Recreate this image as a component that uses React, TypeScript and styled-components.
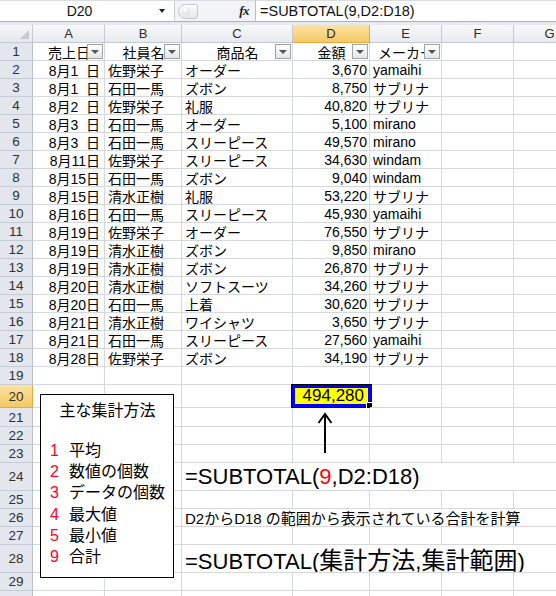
import React from 'react';
import styled, { createGlobalStyle, css } from 'styled-components';

const GlobalStyle = createGlobalStyle`
  html, body {
    margin: 0;
    padding: 0;
    background: #fff;
  }
  body {
    font-family: "Liberation Sans", "Noto Sans CJK JP", sans-serif;
  }
`;

const COLS = '33px 72px 77px 111px 77px 72px 72px 72px';
const GRID = '#d5d8dc';

const Screen = styled.div`
  width: 556px;
  height: 596px;
  overflow: hidden;
  background: #fff;
`;

const TopBar = styled.div`
  display: flex;
  height: 21px;
  box-sizing: border-box;
  border-top: 1px solid #d9dde3;
  background: #f2f4f7;
`;

const NameBox = styled.div`
  width: 175px;
  box-sizing: border-box;
  display: flex;
  align-items: center;
  background: #fff;
  border-right: 1px solid #c9ced6;
  font-size: 14px;
  color: #111;
`;

const NameText = styled.div`
  flex: 1;
  text-align: center;
  padding-left: 4px;
`;

const DropArrow = styled.div`
  width: 0;
  height: 0;
  margin: 0 9px 0 4px;
  border-left: 3px solid transparent;
  border-right: 3px solid transparent;
  border-top: 4px solid #222;
`;

const FxArea = styled.div`
  width: 80px;
  display: flex;
  align-items: center;
  box-sizing: border-box;
  padding-left: 3px;
`;

const Pill = styled.div`
  width: 20px;
  height: 15px;
  box-sizing: border-box;
  border-radius: 8px 3px 3px 8px;
  border: 1px solid #c3c8cf;
  background: linear-gradient(#fdfdfd, #e4e7eb);
  display: flex;
  align-items: center;
  padding-left: 3px;
`;

const PillDot = styled.div`
  width: 8px;
  height: 8px;
  border-radius: 50%;
  background: radial-gradient(circle at 40% 35%, #fff, #cfd3d8);
`;

const Fx = styled.div`
  margin-left: auto;
  margin-right: 6px;
  font-family: "Liberation Serif", serif;
  font-style: italic;
  font-weight: bold;
  font-size: 13px;
  color: #222;
  letter-spacing: -0.5px;
`;

const FormulaInput = styled.div`
  flex: 1;
  display: flex;
  align-items: center;
  background: #fff;
  border-left: 1px solid #b9bfc8;
  padding-left: 4px;
  font-size: 14.5px;
  color: #111;
  white-space: nowrap;
`;

const Strip = styled.div`
  height: 4px;
  box-sizing: border-box;
  border-top: 1px solid #aab2bd;
  background: #e6e9ee;
`;

const Sheet = styled.div`
  position: relative;
`;

const Row = styled.div<{ $h: number }>`
  display: grid;
  grid-template-columns: ${COLS};
  height: ${p => p.$h}px;
`;

const headActive = css`
  background: linear-gradient(#fbe3a3, #f5c863);
  border-color: #e7a83f;
`;

const Corner = styled.div`
  position: relative;
  box-sizing: border-box;
  background: linear-gradient(#f6f7f9, #e5e8ec);
  border-right: 1px solid #c3c9d1;
  border-bottom: 1px solid #c3c9d1;

  &::after {
    content: '';
    position: absolute;
    right: 3px;
    bottom: 3px;
    width: 0;
    height: 0;
    border-left: 9px solid transparent;
    border-bottom: 9px solid #c4c9d0;
  }
`;

const ColHead = styled.div<{ $active?: boolean }>`
  box-sizing: border-box;
  display: flex;
  align-items: center;
  justify-content: center;
  background: linear-gradient(#f8f9fa, #e7eaee);
  border-right: 1px solid #c3c9d1;
  border-bottom: 1px solid #c3c9d1;
  font-size: 13px;
  color: #2b2b2b;
  ${p => p.$active && headActive}
`;

const RowHead = styled.div<{ $active?: boolean }>`
  box-sizing: border-box;
  display: flex;
  align-items: center;
  justify-content: center;
  background: #e3e7ed;
  border-right: 1px solid #b9c1cc;
  border-bottom: 1px solid #c6ccd5;
  font-size: 13.5px;
  color: #2f2f2f;
  ${p => p.$active && headActive}
`;

const Cell = styled.div<{ $align?: 'left' | 'right' | 'center'; $span?: number }>`
  position: relative;
  box-sizing: border-box;
  display: flex;
  align-items: center;
  justify-content: ${p => (p.$align === 'right' ? 'flex-end' : p.$align === 'center' ? 'center' : 'flex-start')};
  padding: 0 2px 0 3px;
  border-right: 1px solid ${GRID};
  border-bottom: 1px solid ${GRID};
  font-size: 14px;
  color: #000;
  white-space: nowrap;
  overflow: hidden;
  ${p => p.$span && css`grid-column: span ${p.$span};`}
`;

const DateCell = styled(Cell)`
  padding-right: 4px;
`;

const DayPad = styled.span`
  display: inline-block;
  width: 0.556em;
`;

const SelectedCell = styled(Cell)`
  background: #ffff00;
  overflow: visible;
  padding-right: 5px;
  font-size: 17px;

  &::before {
    content: '';
    position: absolute;
    left: -2px;
    top: -1px;
    right: -3px;
    bottom: -1px;
    border: 1px solid #000;
    box-shadow: inset 0 0 0 3px #0000ff;
  }
`;

const CellText = styled.span`
  position: relative;
`;

const FillHandle = styled.div`
  position: absolute;
  right: -4px;
  bottom: -2px;
  width: 5px;
  height: 5px;
  background: #000;
  border: 1px solid #fff;
`;

const FilterButton = styled.div`
  position: absolute;
  right: 1px;
  top: 1px;
  width: 16px;
  height: 15px;
  box-sizing: border-box;
  border: 1px solid #9ea4ab;
  background: linear-gradient(#ffffff, #e3e5e8);
  display: flex;
  align-items: center;
  justify-content: center;

  &::after {
    content: '';
    width: 0;
    height: 0;
    border-left: 4px solid transparent;
    border-right: 4px solid transparent;
    border-top: 4px solid #555;
  }
`;

const BigFormula = styled.span`
  font-size: 22px;
  color: #000;
`;

const BigKanji = styled.span`
  font-size: 24px;
`;

const Note = styled.span`
  font-size: 15px;
  color: #000;
`;

const Red = styled.span`
  color: #ff0000;
`;

const MethodBox = styled.div`
  position: absolute;
  left: 40px;
  top: 369px;
  width: 134px;
  height: 184px;
  box-sizing: border-box;
  border: 1px solid #000;
  background: #fff;
  padding: 6px 0 0 9px;
  font-size: 16px;
  color: #000;
`;

const BoxTitle = styled.div`
  line-height: 20px;
  text-align: center;
  padding-right: 8px;
  margin-bottom: 19px;
`;

const MethodItem = styled.div`
  display: flex;
  line-height: 21.2px;
`;

const MethodNo = styled.span`
  width: 19px;
  color: #ff0022;
`;

const Arrow = styled.svg`
  position: absolute;
  left: 315px;
  top: 386px;
`;

const HEADERS = ['売上日', '社員名', '商品名', '金額', 'メーカー'];

const DATA: string[][] = [
  ['8月1日', '佐野栄子', 'オーダー', '3,670', 'yamaihi'],
  ['8月1日', '石田一馬', 'ズボン', '8,750', 'サブリナ'],
  ['8月2日', '佐野栄子', '礼服', '40,820', 'サブリナ'],
  ['8月3日', '石田一馬', 'オーダー', '5,100', 'mirano'],
  ['8月3日', '石田一馬', 'スリーピース', '49,570', 'mirano'],
  ['8月11日', '佐野栄子', 'スリーピース', '34,630', 'windam'],
  ['8月15日', '石田一馬', 'ズボン', '9,040', 'windam'],
  ['8月15日', '清水正樹', '礼服', '53,220', 'サブリナ'],
  ['8月16日', '石田一馬', 'スリーピース', '45,930', 'yamaihi'],
  ['8月19日', '佐野栄子', 'オーダー', '76,550', 'サブリナ'],
  ['8月19日', '清水正樹', 'ズボン', '9,850', 'mirano'],
  ['8月19日', '清水正樹', 'ズボン', '26,870', 'サブリナ'],
  ['8月20日', '清水正樹', 'ソフトスーツ', '34,260', 'サブリナ'],
  ['8月20日', '石田一馬', '上着', '30,620', 'サブリナ'],
  ['8月21日', '清水正樹', 'ワイシャツ', '3,650', 'サブリナ'],
  ['8月21日', '石田一馬', 'スリーピース', '27,560', 'yamaihi'],
  ['8月28日', '佐野栄子', 'ズボン', '34,190', 'サブリナ'],
];

const METHODS: [string, string][] = [
  ['1', '平均'],
  ['2', '数値の個数'],
  ['3', 'データの個数'],
  ['4', '最大値'],
  ['5', '最小値'],
  ['9', '合計'],
];

const LOWER_HEIGHTS: Record<number, number> = {
  20: 23, 21: 19, 22: 18, 23: 18, 24: 28, 25: 18, 26: 18, 27: 18, 28: 28, 29: 18,
};

const EmptyCells = ({ n }: { n: number }) => (
  <>
    {Array.from({ length: n }, (_, i) => <Cell key={i} />)}
  </>
);

// single-digit days keep the width of two digits, as the sheet's date format does
const DateText = ({ value }: { value: string }) => {
  const m = value.match(/^(\d+月)(\d+)日$/);
  if (!m) return <>{value}</>;
  return (
    <>
      {m[1]}{m[2]}{m[2].length === 1 && <DayPad />}日
    </>
  );
};

const lowerRow = (r: number) => {
  if (r === 20) {
    return (
      <>
        <Cell /><Cell /><Cell />
        <SelectedCell $align="right">
          <CellText>494,280</CellText>
          <FillHandle />
        </SelectedCell>
        <EmptyCells n={3} />
      </>
    );
  }
  if (r === 24) {
    return (
      <>
        <Cell /><Cell />
        <Cell $span={5}>
          <BigFormula>=SUBTOTAL(<Red>9</Red>,D2:D18)</BigFormula>
        </Cell>
      </>
    );
  }
  if (r === 26) {
    return (
      <>
        <Cell /><Cell />
        <Cell $span={5}>
          <Note>D2からD18 の範囲から表示されている合計を計算</Note>
        </Cell>
      </>
    );
  }
  if (r === 28) {
    return (
      <>
        <Cell /><Cell />
        <Cell $span={5}>
          <BigFormula>
            =SUBTOTAL(<BigKanji>集計方法</BigKanji>,<BigKanji>集計範囲</BigKanji>)
          </BigFormula>
        </Cell>
      </>
    );
  }
  return <EmptyCells n={7} />;
};

export default function App() {
  return (
    <Screen>
      <GlobalStyle />
      <TopBar>
        <NameBox>
          <NameText>D20</NameText>
          <DropArrow />
        </NameBox>
        <FxArea>
          <Pill><PillDot /></Pill>
          <Fx>fx</Fx>
        </FxArea>
        <FormulaInput>=SUBTOTAL(9,D2:D18)</FormulaInput>
      </TopBar>
      <Strip />
      <Sheet>
        <Row $h={18}>
          <Corner />
          {['A', 'B', 'C', 'D', 'E', 'F', 'G'].map(c => (
            <ColHead key={c} $active={c === 'D'}>{c}</ColHead>
          ))}
        </Row>
        <Row $h={18}>
          <RowHead>1</RowHead>
          {HEADERS.map(h => (
            <Cell key={h} $align="center">
              {h}
              <FilterButton />
            </Cell>
          ))}
          <EmptyCells n={2} />
        </Row>
        {DATA.map((d, i) => (
          <Row $h={18} key={i}>
            <RowHead>{i + 2}</RowHead>
            <DateCell $align="right"><DateText value={d[0]} /></DateCell>
            <Cell>{d[1]}</Cell>
            <Cell>{d[2]}</Cell>
            <Cell $align="right">{d[3]}</Cell>
            <Cell>{d[4]}</Cell>
            <EmptyCells n={2} />
          </Row>
        ))}
        <Row $h={18}>
          <RowHead>19</RowHead>
          <EmptyCells n={7} />
        </Row>
        {Object.keys(LOWER_HEIGHTS).map(Number).map(r => (
          <Row $h={LOWER_HEIGHTS[r]} key={r}>
            <RowHead $active={r === 20}>{r}</RowHead>
            {lowerRow(r)}
          </Row>
        ))}
        <Row $h={18}>
          <RowHead />
          <EmptyCells n={7} />
        </Row>

        <MethodBox>
          <BoxTitle>主な集計方法</BoxTitle>
          {METHODS.map(([n, label]) => (
            <MethodItem key={n}>
              <MethodNo>{n}</MethodNo>
              <span>{label}</span>
            </MethodItem>
          ))}
        </MethodBox>

        <Arrow width="20" height="44" viewBox="0 0 20 44">
          <line x1="10" y1="3" x2="10" y2="42" stroke="#000" strokeWidth="2" />
          <polyline points="3.5,12 10,3 16.5,12" fill="none" stroke="#000" strokeWidth="2" />
        </Arrow>
      </Sheet>
    </Screen>
  );
}
